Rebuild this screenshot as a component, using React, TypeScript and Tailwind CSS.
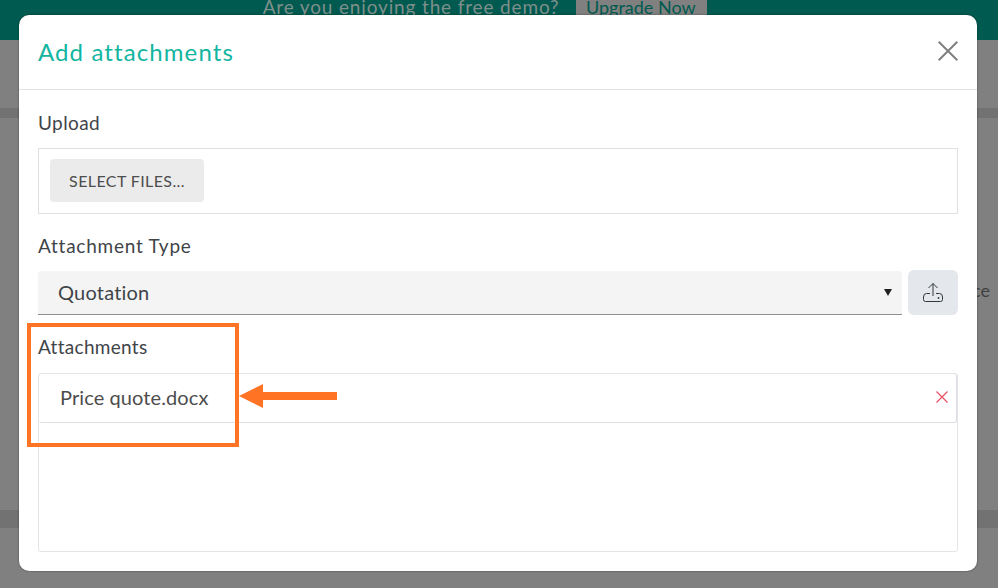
const font = "font-['Lato','Noto_Sans',sans-serif]";

function UploadIcon() {
  return (
    <svg width="20" height="20" viewBox="0 0 20 20" fill="none" stroke="#33383d" strokeWidth="1">
      <path d="M10 0.5V13M5.5 5L10 0.5L14.5 5" />
      <path d="M7 10.5H3.5Q0.5 10.5 0.5 14V16.5Q0.5 18.5 2.5 18.5H17.5Q19.5 18.5 19.5 16.5V14Q19.5 10.5 16.5 10.5H13" />
      <circle cx="15.5" cy="15" r="0.9" fill="#33383d" stroke="none" />
    </svg>
  );
}

function Modal() {
  return (
    <div className="absolute left-[19px] top-[15px] w-[958px] h-[556px] bg-white rounded-[10px] flex flex-col shadow-[0_0_2px_rgba(0,0,0,0.5)]">
      <div className="h-[75px] shrink-0 border-b border-[#e3e3e3] px-[19px] flex items-center justify-between">
        <h2 className="text-[24px] text-[#12b5a0] tracking-[1.1px]">Add attachments</h2>
        <svg width="20" height="20" viewBox="0 0 20 20" stroke="#808080" strokeWidth="2" className="mt-[-2px]">
          <path d="M0.7 0.7L19.3 19.3M19.3 0.7L0.7 19.3" />
        </svg>
      </div>
      <div className="flex-1 px-[19px] flex flex-col">
        <label className="text-[19px] leading-[24px] text-[#3f4449] mt-[21px] tracking-[0.4px]">Upload</label>
        <div className="h-[66px] mt-[13px] border border-[#e0e0e0] flex items-center pl-[11px] pb-[2px]">
          <button className="w-[154px] h-[43px] bg-[#ebebeb] rounded-[4px] text-[16px] text-[#4d4d4d] tracking-[0.4px] pt-[2px]">
            SELECT FILES...
          </button>
        </div>
        <label className="text-[19px] leading-[24px] text-[#3f4449] mt-[20px] tracking-[0.75px]">Attachment Type</label>
        <div className="flex gap-[6px] mt-[12px] h-[45px]">
          <div className="flex-1 mt-[1px] bg-[#f4f4f4] rounded-t-[4px] border-b border-[#8f8f8f] flex items-center justify-between pl-[20px] pr-[10px] pb-[2px]">
            <span className="text-[20px] text-[#3f4449] tracking-[0.2px]">Quotation</span>
            <span className="w-0 h-0 border-l-[4.5px] border-r-[4.5px] border-t-[7px] border-l-transparent border-r-transparent border-t-[#222] mt-[2px]" />
          </div>
          <button className="w-[50px] bg-[#e4e7eb] rounded-[6px] flex items-center justify-center">
            <UploadIcon />
          </button>
        </div>
        <label className="text-[19px] leading-[24px] text-[#3f4449] mt-[20px] tracking-[0.3px]">Attachments</label>
        <div className="h-[179px] mt-[14px] border border-[#e2e4e8] rounded-[3px]">
          <div className="h-[49px] border-b border-r border-[#dcdfe4] rounded-[3px] flex items-center justify-between pl-[21px] pr-[8px] pb-[2px]">
            <span className="text-[20px] text-[#4d4d4d] tracking-[0.1px]">Price quote.docx</span>
            <svg width="12" height="12" viewBox="0 0 12 12" stroke="#e8505f" strokeWidth="1.2">
              <path d="M0.5 0.5L11.5 11.5M11.5 0.5L0.5 11.5" />
            </svg>
          </div>
        </div>
      </div>
    </div>
  );
}

export default function App() {
  return (
    <div className={`relative w-[998px] h-[588px] overflow-hidden bg-[#808080] ${font}`}>
      <div className="h-[40px] bg-[#005a4f] flex justify-center gap-[17px] pr-[28px] text-[19px] leading-[14px]">
        <span className="text-[#7f8f8b] tracking-[0.85px]">Are you enjoying the free demo?</span>
        <span className="h-[15px] w-[131px] bg-[#808080] text-[#005a4f] text-center text-[18px] pr-[2px]">Upgrade Now</span>
      </div>
      <div className="h-[68px]" />
      <div className="h-[10px] bg-[#727272]" />
      <div className="h-[392px] relative">
        <span className="absolute right-[8px] top-[159px] text-[#404040] text-[18px]">ce</span>
      </div>
      <div className="h-[18px] bg-[#727272]" />

      <Modal />

      {/* callout */}
      <div className="absolute left-[27px] top-[323px] w-[212px] h-[124px] border-[4px] border-[#ff7324]" />
      <svg className="absolute left-[239px] top-[384px]" width="99" height="24" viewBox="0 0 99 24">
        <path d="M0 12L24 0V8H98V16H24V24Z" fill="#ff7324" />
      </svg>
    </div>
  );
}
